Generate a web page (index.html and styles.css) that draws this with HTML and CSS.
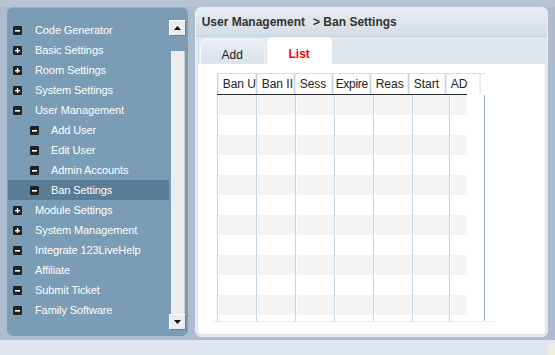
FILE: index.html
```html
<!DOCTYPE html>
<html lang="en">
<head>
    <meta charset="UTF-8">
    <title>Ban Settings</title>
    <link rel="stylesheet" href="styles.css">
</head>
<body>
    <div class="frame">
        <div class="side">
            <ul class="menu">
                <li class="item"><svg class="ico" viewBox="0 0 9 9"><rect width="9" height="9" rx="1" fill="#222"/><rect x="2" y="4" width="5" height="1.6" fill="#fff"/></svg>Code Generator</li>
                <li class="item"><svg class="ico" viewBox="0 0 9 9"><rect width="9" height="9" rx="1" fill="#222"/><rect x="2" y="4" width="5" height="1.4" fill="#fff"/><rect x="3.8" y="2" width="1.4" height="5" fill="#fff"/></svg>Basic Settings</li>
                <li class="item"><svg class="ico" viewBox="0 0 9 9"><rect width="9" height="9" rx="1" fill="#222"/><rect x="2" y="4" width="5" height="1.4" fill="#fff"/><rect x="3.8" y="2" width="1.4" height="5" fill="#fff"/></svg>Room Settings</li>
                <li class="item"><svg class="ico" viewBox="0 0 9 9"><rect width="9" height="9" rx="1" fill="#222"/><rect x="2" y="4" width="5" height="1.4" fill="#fff"/><rect x="3.8" y="2" width="1.4" height="5" fill="#fff"/></svg>System Settings</li>
                <li class="item"><svg class="ico" viewBox="0 0 9 9"><rect width="9" height="9" rx="1" fill="#222"/><rect x="2" y="4" width="5" height="1.6" fill="#fff"/></svg>User Management</li>
                <li class="item sub"><svg class="ico" viewBox="0 0 9 9"><rect width="9" height="9" rx="1" fill="#222"/><rect x="2" y="4" width="5" height="1.6" fill="#fff"/></svg>Add User</li>
                <li class="item sub"><svg class="ico" viewBox="0 0 9 9"><rect width="9" height="9" rx="1" fill="#222"/><rect x="2" y="4" width="5" height="1.6" fill="#fff"/></svg>Edit User</li>
                <li class="item sub"><svg class="ico" viewBox="0 0 9 9"><rect width="9" height="9" rx="1" fill="#222"/><rect x="2" y="4" width="5" height="1.6" fill="#fff"/></svg>Admin Accounts</li>
                <li class="item sub active"><svg class="ico" viewBox="0 0 9 9"><rect width="9" height="9" rx="1" fill="#222"/><rect x="2" y="4" width="5" height="1.6" fill="#fff"/></svg>Ban Settings</li>
                <li class="item"><svg class="ico" viewBox="0 0 9 9"><rect width="9" height="9" rx="1" fill="#222"/><rect x="2" y="4" width="5" height="1.4" fill="#fff"/><rect x="3.8" y="2" width="1.4" height="5" fill="#fff"/></svg>Module Settings</li>
                <li class="item"><svg class="ico" viewBox="0 0 9 9"><rect width="9" height="9" rx="1" fill="#222"/><rect x="2" y="4" width="5" height="1.4" fill="#fff"/><rect x="3.8" y="2" width="1.4" height="5" fill="#fff"/></svg>System Management</li>
                <li class="item"><svg class="ico" viewBox="0 0 9 9"><rect width="9" height="9" rx="1" fill="#222"/><rect x="2" y="4" width="5" height="1.6" fill="#fff"/></svg>Integrate 123LiveHelp</li>
                <li class="item"><svg class="ico" viewBox="0 0 9 9"><rect width="9" height="9" rx="1" fill="#222"/><rect x="2" y="4" width="5" height="1.6" fill="#fff"/></svg>Affiliate</li>
                <li class="item"><svg class="ico" viewBox="0 0 9 9"><rect width="9" height="9" rx="1" fill="#222"/><rect x="2" y="4" width="5" height="1.6" fill="#fff"/></svg>Submit Ticket</li>
                <li class="item"><svg class="ico" viewBox="0 0 9 9"><rect width="9" height="9" rx="1" fill="#222"/><rect x="2" y="4" width="5" height="1.6" fill="#fff"/></svg>Family Software</li>
            </ul>
            <div class="scroll">
                <div class="sbtn"><svg viewBox="0 0 7 4" width="7" height="4"><polygon points="0,4 3.5,0 7,4" fill="#111"/></svg></div>
                <div class="thumb"></div>
                <div class="sbtn"><svg viewBox="0 0 7 4" width="7" height="4"><polygon points="0,0 7,0 3.5,4" fill="#111"/></svg></div>
            </div>
        </div>

        <div class="main">
            <div class="crumb">User Management<span class="crumb-sep">&gt; Ban Settings</span></div>
            <div class="tabs">
                <div class="tab">Add</div>
                <div class="tab current">List</div>
            </div>
            <div class="content">
                <div class="grid">
                    <div class="grid-head">
                        <div class="hcell">Ban U</div>
                        <div class="hcell">Ban II</div>
                        <div class="hcell">Sess</div>
                        <div class="hcell tight">Expire</div>
                        <div class="hcell">Reas</div>
                        <div class="hcell">Start</div>
                        <div class="hcell">AD</div>
                    </div>
                    <div class="grid-line"></div>
                    <div class="grid-body">
                        <div class="col"></div>
                        <div class="col"></div>
                        <div class="col"></div>
                        <div class="col"></div>
                        <div class="col"></div>
                        <div class="col"></div>
                        <div class="col last"></div>
                    </div>
                    <div class="grid-foot"></div>
                </div>
            </div>
        </div>
    </div>
    <div class="footer"><div class="corner"></div></div>
</body>
</html>
```

FILE: styles.css
```css
body {
    margin: 0;
    width: 555px;
    height: 355px;
    overflow: hidden;
    background-color: #adbdcf;
    font-family: "Liberation Sans", Arial, sans-serif;
}
.frame {
    display: flex;
    align-items: flex-start;
    gap: 7px;
    height: 333px;
    padding: 7px 7px 0 7px;
    background: linear-gradient(#b6c4d4 0, #b6c4d4 7px, #adbdcf 7px);
}

/* left navigation */
.side {
    display: flex;
    width: 180px;
    height: 316px;
    padding: 12px 0 0 1px;
    box-sizing: content-box;
    background-color: #7a9cb5;
    border-top: 1px solid #93afc4;
    border-radius: 6px;
}
.menu {
    list-style: none;
    margin: 0;
    padding: 0;
    width: 161px;
}
.item {
    display: flex;
    align-items: center;
    height: 20px;
    padding-left: 5px;
    color: #fff;
    font-size: 11px;
    letter-spacing: -0.1px;
    white-space: nowrap;
}
.item.sub {
    padding-left: 22px;
}
.item.active {
    background-color: #5a7d97;
}
.ico {
    width: 9px;
    height: 9px;
    margin-right: 13px;
    flex: none;
}
.item.sub .ico {
    margin-right: 12px;
}
.scroll {
    display: flex;
    flex-direction: column;
    width: 17px;
    height: 310px;
}
.sbtn {
    display: flex;
    align-items: center;
    justify-content: center;
    height: 14px;
    background-color: #ececec;
    border: 1px solid #fff;
    border-right-color: #6d7f8c;
    border-bottom-color: #6d7f8c;
}
.thumb {
    flex: 1;
    margin: 15px 1px 0 2px;
    background-color: #ededed;
    border-right: 1px solid #c5cdd4;
}

/* right panel */
.main {
    display: flex;
    flex-direction: column;
    width: 352px;
    height: 328px;
    background-color: #dfe7ef;
    border: 1px solid #e8eef4;
    border-radius: 6px;
    overflow: hidden;
}
.crumb {
    height: 28px;
    line-height: 29px;
    padding-left: 6px;
    font-size: 12px;
    font-weight: bold;
    color: #333;
    background: linear-gradient(#e7edf3, #d3dde7);
    border-bottom: 1px solid #c7d4e0;
}
.crumb-sep {
    margin-left: 8px;
}
.tabs {
    display: flex;
    align-items: flex-end;
    gap: 2px;
    height: 27px;
    padding-left: 4px;
}
.tab {
    width: 63px;
    height: 24px;
    line-height: 30px;
    text-align: center;
    font-size: 12px;
    color: #222;
    background: linear-gradient(#eef2f6, #dce4ed 60%);
    border: 1px solid #f4f7fa;
    border-bottom: none;
    border-radius: 5px 5px 0 0;
}
.tab.current {
    height: 26px;
    line-height: 32px;
    background: #fff;
    color: #f00;
    font-weight: bold;
    border-color: #fff;
}
.content {
    flex: 1;
    margin: 0 2px 2px 2px;
    padding: 9px 0 0 19px;
    background-color: #fff;
    border-radius: 0 0 4px 4px;
}

/* list grid */
.grid {
    width: 268px;
}
.grid-head {
    display: flex;
    height: 20px;
    border-top: 1px solid #d3dee7;
}
.hcell {
    width: 38px;
    flex: none;
    padding-left: 5px;
    box-sizing: border-box;
    line-height: 20px;
    font-size: 12px;
    color: #222;
    white-space: nowrap;
    overflow: hidden;
    border-left: 1px solid #c2d3df;
    box-shadow: inset 1px 0 #eaf0f5, inset -1px 0 #eaf0f5;
}
.hcell.tight {
    padding-left: 3px;
    letter-spacing: -0.3px;
}
.hcell:nth-child(1) { width: 39px; }
.hcell:nth-child(6) { width: 37px; }
.hcell:nth-child(7) { width: 36px; border-right: 1px solid #e3eaf0; }
.grid-line {
    width: 250px;
    height: 1px;
    background-color: #2b2b2b;
}
.grid-body {
    display: flex;
    height: 226px;
    background: repeating-linear-gradient(#f4f4f4 0, #f4f4f4 20px, #fff 20px, #fff 40px);
    background-size: 249px 100%;
    background-position: 1px 0;
    background-repeat: no-repeat;
}
.col {
    width: 38px;
    flex: none;
    border-left: 1px solid #c4d5e1;
    box-shadow: inset 1px 0 #fff;
}
.col:nth-child(6) { width: 36px; }
.col.last {
    width: 34px;
    border-right: 1px solid #9fb3c4;
}
.grid-foot {
    width: 283px;
    height: 1px;
    margin-left: -4px;
    background-color: #eeeeee;
}

.footer {
    display: flex;
    justify-content: flex-end;
    height: 15px;
    background-color: #dfe6ef;
}
.corner {
    width: 7px;
    height: 12px;
    margin-top: 3px;
    background-color: #eeeedc;
}
```
